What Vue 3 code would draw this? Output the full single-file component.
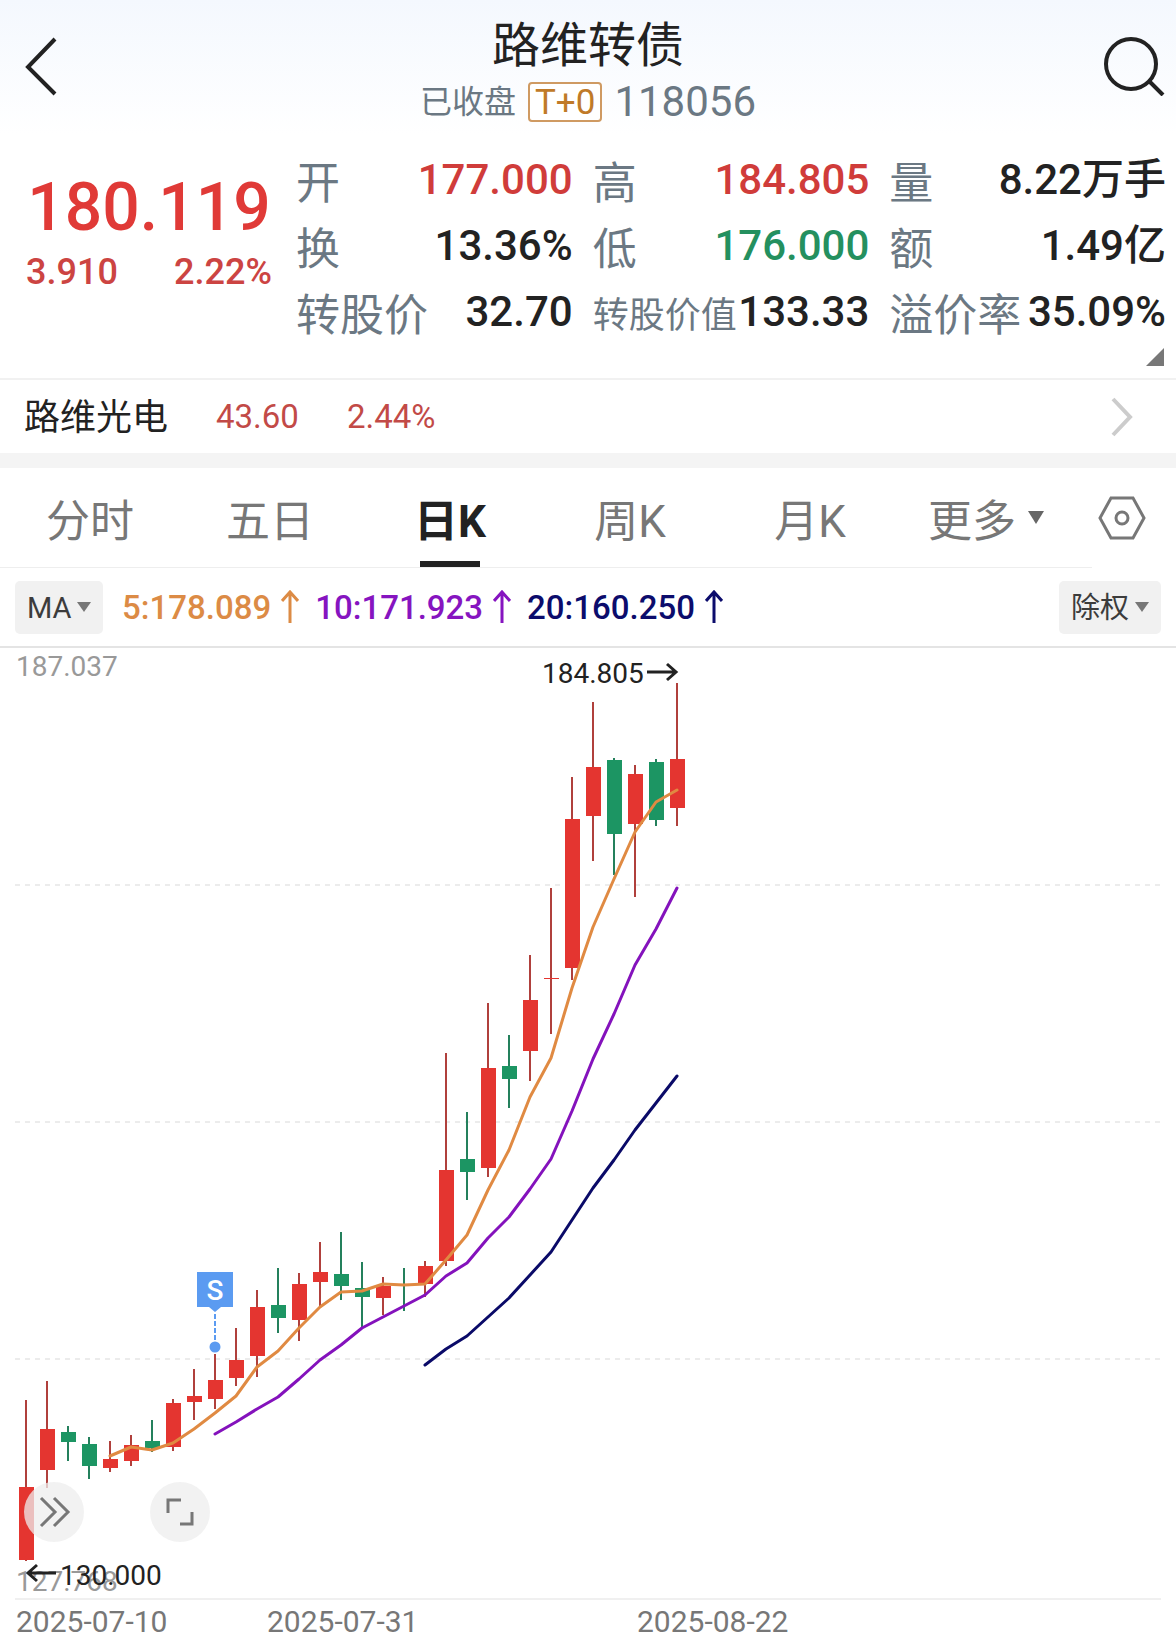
<template>
  <div class="page">
    <header class="header">
      <button class="icon-btn" aria-label="返回">
        <svg width="62" height="60" viewBox="0 0 62 60">
          <path d="M45 3 L18 31 L45 58" class="stroke-dark" />
        </svg>
      </button>
      <div class="heading">
        <h1>路维转债</h1>
        <div class="sub">
          <span class="state">已收盘</span>
          <span class="badge">T+0</span>
          <span class="code">118056</span>
        </div>
      </div>
      <button class="icon-btn" aria-label="搜索">
        <svg width="62" height="60" viewBox="0 0 62 60">
          <circle cx="27" cy="28" r="25" class="stroke-dark" />
          <path d="M45 45 L59 59" class="stroke-dark" />
        </svg>
      </button>
    </header>

    <section class="quote">
      <div class="price">
        <div class="last">180.119</div>
        <div class="change">
          <span>3.910</span>
          <span>2.22%</span>
        </div>
      </div>
      <dl class="stats">
        <div v-for="item in stats" :key="item.label" class="stat">
          <dt :class="{ small: item.label.length > 3 }">{{ item.label }}</dt>
          <dd :class="item.tone">{{ item.value }}</dd>
        </div>
      </dl>
      <span class="corner"></span>
    </section>

    <a class="stock" href="#">
      <span class="stock-name">路维光电</span>
      <span class="stock-num">43.60</span>
      <span class="stock-num">2.44%</span>
      <svg class="stock-arrow" width="24" height="40" viewBox="0 0 24 40">
        <path d="M3 2 L20 20 L3 38" />
      </svg>
    </a>

    <nav class="tab-bar">
      <div class="tabs">
        <button
          v-for="tab in tabs"
          :key="tab"
          class="tab"
          :class="{ active: activeTab === tab }"
          @click="activeTab = tab"
        >
          <span>{{ tab }}</span>
          <i v-if="tab === '更多'" class="caret"></i>
        </button>
      </div>
      <button class="setting" aria-label="设置">
        <svg width="48" height="44" viewBox="0 0 48 44">
          <path d="M13 2 H35 L46 22 L35 42 H13 L2 22 Z" />
          <circle cx="24" cy="22" r="6" />
        </svg>
      </button>
    </nav>

    <div class="indicators">
      <div class="picker">
        <select v-model="indicator" class="pick-ma" aria-label="指标">
          <option>MA</option>
        </select>
        <i class="caret"></i>
      </div>
      <div class="averages">
        <span v-for="ma in averages" :key="ma.period" class="ma" :class="'ma' + ma.period">
          {{ ma.period }}:{{ ma.value }}
          <svg width="18" height="34" viewBox="0 0 18 34">
            <path d="M9 33 V3 M1 11 L9 2 L17 11" />
          </svg>
        </span>
      </div>
      <div class="picker">
        <select v-model="adjust" class="pick-adjust" aria-label="复权">
          <option>除权</option>
          <option>复权</option>
        </select>
        <i class="caret"></i>
      </div>
    </div>

    <div class="chart">
      <svg class="kline" viewBox="0 648 1176 992">
        <line v-for="y in [885, 1122, 1359]" :key="y" x1="15" x2="1160" :y1="y" :y2="y" class="grid" />
        <line x1="15" x2="1161" y1="1599" y2="1599" class="axis" />

        <text x="16" y="676" class="scale">187.037</text>
        <text x="16" y="1591" class="scale">127.768</text>

        <g v-for="(c, i) in candles" :key="i" :class="c[0]">
          <rect :x="xOf(i) - 1" :y="c[1]" width="2" :height="c[4] - c[1]" class="wick" />
          <rect :x="xOf(i) - 7" :y="c[2]" width="15" :height="c[3] - c[2]" class="body" />
        </g>

        <polyline :points="pointsOf(ma5, 4)" class="line5" />
        <polyline :points="pointsOf(ma10, 9)" class="line10" />
        <polyline :points="pointsOf(ma20, 19)" class="line20" />

        <!-- sell mark -->
        <path d="M197 1272 H233 V1307 H221 L215 1312 L209 1307 H197 Z" class="mark" />
        <line x1="215" x2="215" y1="1314" y2="1342" class="mark-line" />
        <circle cx="215" cy="1347" r="5.5" class="mark" />
        <text x="215" y="1300" class="mark-text">S</text>

        <text x="542" y="683" class="peak">184.805</text>
        <path d="M647 672 H676 M667 664 L676 672 L667 680" class="arrow" />
        <text x="60" y="1585" class="peak">130.000</text>
        <path d="M56 1573 H28 M37 1565 L28 1573 L37 1581" class="arrow" />

        <text x="16" y="1632" class="date">2025-07-10</text>
        <text x="267" y="1632" class="date">2025-07-31</text>
        <text x="637" y="1632" class="date">2025-08-22</text>
      </svg>
      <div class="tools">
        <button class="tool" aria-label="展开">
          <svg width="60" height="60" viewBox="0 0 60 60">
            <path d="M17 16 L31 30 L17 44 M30 16 L44 30 L30 44" />
          </svg>
        </button>
        <button class="tool" aria-label="全屏">
          <svg width="60" height="60" viewBox="0 0 60 60">
            <path d="M18 31 V18 H31 M42 30 V42 H30" />
          </svg>
        </button>
      </div>
    </div>
  </div>
</template>

<script setup>
import { ref } from 'vue'

const stats = [
  { label: '开', value: '177.000', tone: 'up' },
  { label: '高', value: '184.805', tone: 'up' },
  { label: '量', value: '8.22万手' },
  { label: '换', value: '13.36%' },
  { label: '低', value: '176.000', tone: 'down' },
  { label: '额', value: '1.49亿' },
  { label: '转股价', value: '32.70' },
  { label: '转股价值', value: '133.33' },
  { label: '溢价率', value: '35.09%' }
]

const tabs = ['分时', '五日', '日K', '周K', '月K', '更多']
const activeTab = ref('日K')
const indicator = ref('MA')
const adjust = ref('除权')

const averages = [
  { period: 5, value: '178.089' },
  { period: 10, value: '171.923' },
  { period: 20, value: '160.250' }
]

// [direction, high, body top, body bottom, low]
const candles = [
  ['up', 1400, 1487, 1560, 1561],
  ['up', 1381, 1429, 1470, 1488],
  ['down', 1426, 1432, 1442, 1461],
  ['down', 1437, 1444, 1466, 1479],
  ['up', 1441, 1459, 1468, 1472],
  ['up', 1435, 1445, 1461, 1466],
  ['down', 1420, 1441, 1448, 1452],
  ['up', 1399, 1403, 1447, 1451],
  ['up', 1369, 1396, 1402, 1420],
  ['up', 1354, 1380, 1399, 1409],
  ['up', 1328, 1360, 1378, 1386],
  ['up', 1290, 1307, 1356, 1377],
  ['down', 1268, 1305, 1318, 1333],
  ['up', 1273, 1284, 1320, 1341],
  ['up', 1242, 1272, 1282, 1306],
  ['down', 1232, 1274, 1286, 1300],
  ['down', 1262, 1288, 1297, 1327],
  ['up', 1277, 1286, 1298, 1315],
  ['down', 1268, 1284, 1285, 1311],
  ['up', 1261, 1266, 1284, 1297],
  ['up', 1053, 1170, 1261, 1266],
  ['down', 1112, 1159, 1172, 1200],
  ['up', 1003, 1068, 1168, 1177],
  ['down', 1035, 1066, 1079, 1108],
  ['up', 955, 1000, 1051, 1081],
  ['up', 888, 978, 979, 1034],
  ['up', 777, 819, 968, 980],
  ['up', 702, 767, 816, 861],
  ['down', 758, 760, 834, 875],
  ['up', 765, 774, 824, 897],
  ['down', 759, 762, 820, 826],
  ['up', 683, 759, 808, 826]
]

const ma5 = [
  1456, 1447, 1450, 1443, 1429, 1413, 1396, 1367, 1351, 1328, 1307, 1292, 1291, 1284,
  1285, 1284, 1260, 1235, 1190, 1150, 1097, 1058, 988, 927, 879, 832, 802, 790
]
const ma10 = [
  1434, 1422, 1409, 1397, 1379, 1360, 1345, 1328, 1317, 1306, 1295, 1276,
  1263, 1238, 1217, 1189, 1159, 1111, 1059, 1014, 965, 929, 888
]
const ma20 = [1365, 1349, 1336, 1317, 1298, 1275, 1252, 1220, 1188, 1160, 1130, 1103, 1076]

function xOf(index) {
  return 26 + index * 21
}

function pointsOf(values, start) {
  return values.map((y, i) => `${xOf(i + start)},${y}`).join(' ')
}
</script>

<style>
body {
  margin: 0;
  background: #fff;
}
</style>

<style scoped>
.page {
  font-family: Roboto, 'Noto Sans CJK SC', sans-serif;
  color: #222;
  background: #fff;
}

button {
  padding: 0;
  border: none;
  background: none;
  font: inherit;
  color: inherit;
  cursor: pointer;
}

svg {
  display: block;
  fill: none;
}

.stroke-dark {
  stroke: #222;
  stroke-width: 4;
}

.header {
  display: flex;
  justify-content: space-between;
  align-items: flex-start;
  padding: 18px 10px 28px;
  background: linear-gradient(#f4f8fe, #fff 90%);
}

.icon-btn {
  width: 62px;
  margin-top: 18px;
}

.heading {
  text-align: center;
}

h1 {
  margin: 0;
  font-size: 48px;
  line-height: 56px;
  font-weight: 400;
}

.sub {
  display: flex;
  align-items: center;
  justify-content: center;
  gap: 12px;
  margin-top: 8px;
  line-height: 40px;
  color: #6b7883;
}

.state {
  font-size: 32px;
}

.badge {
  padding: 1px 5px 0;
  border: 2px solid #cf9a62;
  border-radius: 4px;
  font-size: 35px;
  line-height: 35px;
  color: #c07a28;
  background: #fff;
}

.code {
  font-size: 42px;
}

.quote {
  position: relative;
  display: flex;
  padding: 0 10px 30px 26px;
  border-bottom: 2px solid #f1f1f1;
}

.price {
  width: 246px;
  margin-right: 24px;
  padding-top: 20px;
  color: #e03a37;
  font-weight: 500;
}

.last {
  text-align: center;
  font-size: 66px;
  line-height: 76px;
}

.change {
  display: flex;
  justify-content: space-between;
  font-size: 36px;
  line-height: 52px;
  color: #cc4442;
}

.stats {
  flex: 1;
  display: grid;
  grid-template-columns: repeat(3, 1fr);
  column-gap: 20px;
  margin: 0;
}

.stat {
  display: flex;
  justify-content: space-between;
  align-items: flex-start;
  min-width: 0;
  height: 66px;
  white-space: nowrap;
}

dt {
  font-size: 44px;
  line-height: 68px;
  color: #6b7883;
}

dt.small {
  font-size: 36px;
}

dd {
  margin: 0;
  font-size: 42px;
  line-height: 60px;
  font-weight: 500;
}

dd.up {
  color: #d03c3a;
}

dd.down {
  color: #24905f;
}

.corner {
  position: absolute;
  right: 12px;
  bottom: 12px;
  border-left: 18px solid transparent;
  border-bottom: 18px solid #777;
}

.stock {
  display: flex;
  align-items: center;
  gap: 48px;
  height: 73px;
  padding: 0 42px 0 24px;
  border-bottom: 15px solid #f4f4f4;
  line-height: 70px;
  color: #222;
  text-decoration: none;
}

.stock-name {
  padding-top: 3px;
  font-size: 36px;
}

.stock-num {
  font-size: 33px;
  color: #c24a47;
}

.stock-arrow {
  margin-left: auto;
  stroke: #ccc;
  stroke-width: 4;
}

.tab-bar {
  display: flex;
}

.tabs {
  flex: 1;
  display: flex;
  padding-right: 12px;
  border-bottom: 1px solid #eee;
}

.tab {
  position: relative;
  flex: 1;
  display: flex;
  align-items: center;
  justify-content: center;
  gap: 12px;
  height: 99px;
  font-size: 44px;
  color: #777;
}

.tab .caret {
  margin-right: 8px;
}

.tab.active {
  color: #222;
  font-weight: 700;
}

.tab.active::after {
  content: '';
  position: absolute;
  bottom: 0;
  width: 60px;
  height: 6px;
  background: #222;
}

.caret {
  border: 8px solid transparent;
  border-top: 13px solid #666;
  border-bottom: none;
}

.setting {
  width: 60px;
  margin-right: 24px;
}

.setting svg {
  margin: 0 auto;
  stroke: #777;
  stroke-width: 3;
}

.indicators {
  display: flex;
  align-items: center;
  gap: 19px;
  height: 52px;
  padding: 13px 15px;
  border-bottom: 2px solid #e4e4e4;
}

.picker {
  position: relative;
  display: flex;
  align-items: center;
}

.picker select {
  height: 53px;
  padding: 2px 12px 0;
  border: none;
  border-radius: 5px;
  appearance: none;
  background: #f1f1f1;
  font: inherit;
  font-size: 29px;
  color: #3c3c3c;
}

.pick-ma {
  width: 88px;
}

.pick-adjust {
  width: 102px;
}

.picker .caret {
  position: absolute;
  right: 12px;
  border-width: 10px 7px 0;
  border-top-color: #777;
  pointer-events: none;
}

.averages {
  flex: 1;
  display: flex;
  gap: 16px;
}

.ma {
  display: flex;
  align-items: center;
  gap: 10px;
  font-size: 33px;
  font-weight: 500;
}

.ma svg {
  stroke: currentColor;
  stroke-width: 3;
}

.ma5 {
  color: #dc8b45;
}

.ma10 {
  color: #8614c0;
}

.ma20 {
  color: #0c0c6c;
}

.chart {
  position: relative;
}

.kline {
  width: 100%;
  height: auto;
}

.grid {
  stroke: #ececec;
  stroke-width: 2;
  stroke-dasharray: 5 5;
}

.axis {
  stroke: #f0f0f0;
  stroke-width: 2;
}

.scale {
  font-size: 28px;
  fill: #999;
}

.date {
  font-size: 30px;
  fill: #777;
}

.peak {
  font-size: 28px;
  fill: #222;
}

.arrow {
  stroke: #222;
  stroke-width: 3;
}

.up .wick {
  fill: #b0403c;
}

.up .body {
  fill: #e43530;
}

.down .wick {
  fill: #24805c;
}

.down .body {
  fill: #1c9563;
}

.line5,
.line10,
.line20 {
  stroke-width: 3;
  stroke-linecap: round;
  stroke-linejoin: round;
}

.line5 {
  stroke: #e08a42;
}

.line10 {
  stroke: #8412bc;
}

.line20 {
  stroke: #0a0a68;
}

.mark {
  fill: #5b9bf1;
}

.mark-line {
  stroke: #5b9bf1;
  stroke-width: 2;
  stroke-dasharray: 5 2;
}

.mark-text {
  font-size: 28px;
  font-weight: 500;
  fill: #fff;
  text-anchor: middle;
}

.tools {
  position: absolute;
  left: 24px;
  bottom: 98px;
  display: flex;
  gap: 66px;
}

.tool {
  border-radius: 50%;
  background: rgba(238, 238, 238, 0.75);
}

.tool svg {
  stroke: #777;
  stroke-width: 3;
}
</style>
